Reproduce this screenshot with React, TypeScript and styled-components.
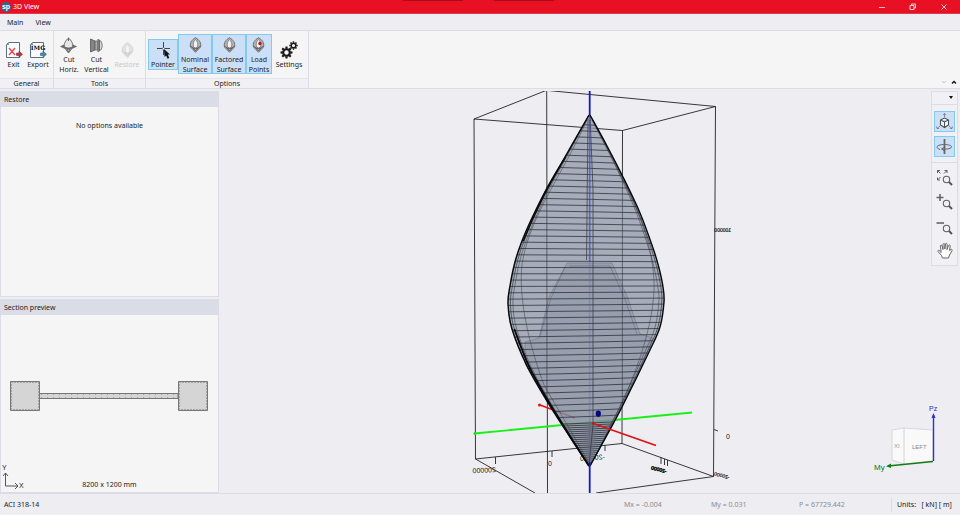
import React from "react";
import styled, { createGlobalStyle, css } from "styled-components";

const GlobalStyle = createGlobalStyle`
  * { box-sizing: border-box; }
  body { margin: 0; background: #eeedf2; color: #222; font-family: "Noto Sans", "Open Sans", sans-serif; font-size: 7px; line-height: 10px; }
  button { font: inherit; color: inherit; border: 0; padding: 0; background: none; }
  svg { display: block; }
`;

const Page = styled.div`
  min-height: 100vh;
  display: grid;
  grid-template-rows: 14px 17px 58px 1fr 22px;
`;

const TitleBar = styled.header`
  display: flex;
  align-items: center;
  gap: 2px;
  padding: 0 2px 0 1px;
  background: #e81123;
  color: #fff;
  border-bottom: 1px solid #dc3e50;
`;

const Title = styled.h1`
  flex: 1;
  margin: 0;
  font-size: 7px;
  font-weight: 400;
`;

const TitleTabs = styled.div`
  position: absolute;
  top: 0;
  left: 42%;
  width: 60px;
  height: 1px;
  background: #a50d1a;
  box-shadow: 91px 0 #a50d1a;
`;

const WindowButton = styled.button`
  width: 29px;
  height: 13px;
  display: grid;
  place-items: center;
`;

const MenuBar = styled.nav`
  display: flex;
  align-items: center;
  border-bottom: 1px solid #dcdce6;
`;

const MenuItem = styled.button`
  height: 16px;
  padding: 2px 6px 0;
  &:first-child { margin-left: 1px; }
`;

const Ribbon = styled.div`
  display: flex;
  background: #f5f5f5;
  border-bottom: 1px solid #dcdce6;
`;

const RibbonGroup = styled.section<{ $width: number }>`
  width: ${(p) => p.$width}px;
  display: grid;
  grid-template-rows: 1fr 10px;
  border-right: 1px solid #dcdce6;
`;

const RibbonItems = styled.div`
  display: flex;
  align-items: flex-start;
  justify-content: center;
  padding-top: 3px;
`;

const GroupName = styled.h2`
  margin: 0;
  font-size: 7px;
  font-weight: 400;
  text-align: center;
  border-top: 1px solid #e4e4ec;
  background: #f1f1f5;
`;

const RibbonButton = styled.button<{ $width: number; $on?: boolean; $short?: boolean; $off?: boolean }>`
  width: ${(p) => p.$width}px;
  height: ${(p) => (p.$short ? 31 : 40)}px;
  margin-top: ${(p) => (p.$short ? 5 : 0)}px;
  display: grid;
  grid-template-rows: 20px auto;
  align-content: start;
  justify-content: center;
  align-items: center;
  justify-items: center;
  text-align: center;
  white-space: pre;
  border: 1px solid transparent;
  ${(p) => p.$on && css`background: #cbdff7; border-color: #83cbee;`}
  ${(p) => p.$off && css`color: #c9c9c9;`}
`;

const RibbonEnd = styled.div`
  flex: 1;
  display: flex;
  align-items: flex-end;
  justify-content: flex-end;
  gap: 4px;
  padding: 0 3px 3px;
`;

const SmallButton = styled.button`
  width: 6px;
  height: 6px;
`;

const Workspace = styled.main`
  display: grid;
  grid-template-columns: 219px 1fr 29px;
  min-height: 0;
  padding-top: 2px;
`;

const Sidebar = styled.aside`
  display: grid;
  grid-template-rows: 206px 1fr;
  gap: 2px;
`;

const Panel = styled.section`
  display: flex;
  flex-direction: column;
  background: #f5f5f5;
  border: 1px solid #dcdce6;
`;

const PanelTitle = styled.h2`
  margin: 0;
  padding: 3px 3px 2px;
  font-size: 7px;
  font-weight: 400;
  background: #dadce6;
`;

const EmptyNote = styled.p`
  margin: 14px 0 0;
  text-align: center;
`;

const Preview = styled.figure`
  flex: 1;
  margin: 0;
  display: flex;
  flex-direction: column;
  justify-content: flex-end;
`;

const SectionDrawing = styled.svg`
  width: 100%;
  height: 32px;
  margin-bottom: 51px;
`;

const PreviewFooter = styled.figcaption`
  display: grid;
  grid-template-columns: 26px 1fr 26px;
  align-items: end;
  text-align: center;
  padding-bottom: 2px;
`;

const Viewport = styled.div`
  position: relative;
  min-width: 0;
`;

const Scene = styled.svg`
  width: 100%;
  height: 100%;
`;

const ViewCube = styled.svg`
  position: absolute;
  right: -9px;
  bottom: 16px;
`;

const SceneText = styled.text<{ $size?: number }>`
  font-family: "Liberation Sans", Arial, sans-serif;
  font-size: ${(p) => p.$size ?? 7}px;
`;

const ToolStrip = styled.div`
  width: 27px;
  height: 175px;
  display: flex;
  flex-direction: column;
  align-items: center;
  background: #f1f1f5;
  border: 1px solid #dcdce6;
`;

const StripMenu = styled.button`
  width: 100%;
  height: 13px;
  display: flex;
  justify-content: flex-end;
  align-items: center;
  padding-right: 4px;
  border-bottom: 1px solid #dcdce6;
  margin-bottom: 6px;
`;

const StripButton = styled.button<{ $on?: boolean }>`
  width: 21px;
  height: 21px;
  margin-bottom: 4px;
  display: grid;
  place-items: center;
  border: 1px solid transparent;
  ${(p) => p.$on && css`background: #cbdff7; border-color: #83cbee;`}
`;

const StripDivider = styled.hr`
  width: 100%;
  margin: 1px 0 4px;
  border: 0;
  border-top: 1px solid #dcdce6;
`;

const StatusBar = styled.footer`
  display: grid;
  grid-template-columns: 1fr 87px 88px 92px 69px;
  align-items: center;
  padding-left: 4px;
  border-top: 1px solid #dcdce6;
`;

const Reading = styled.span`
  color: #8c8c92;
`;

const Units = styled.span`
  padding: 2px 0 2px 5px;
  border-left: 1px solid #dcdce6;
  white-space: pre;
`;

type Pt = [number, number];

const leftProfile: Pt[] = [[589, 115], [565, 157], [547, 188], [532, 218], [522, 241], [515, 262], [510, 286], [508, 304], [512, 329], [527, 366], [547, 401], [570, 437], [589, 466]];
const rightProfile: Pt[] = [[590, 115], [607, 146], [623, 177], [640, 213], [653, 248], [659, 268], [663, 287], [664, 302], [660, 327], [649, 352], [622, 407], [606, 437], [590, 466]];

const curve = (pts: Pt[], start = "M") =>
  pts.reduce((d, p, i) => {
    if (i === 0) return `${start}${p[0]} ${p[1]}`;
    const a = pts[Math.max(i - 2, 0)];
    const b = pts[i - 1];
    const e = pts[Math.min(i + 1, pts.length - 1)];
    return `${d}C${b[0] + (p[0] - a[0]) / 6} ${b[1] + (p[1] - a[1]) / 6} ${p[0] - (e[0] - b[0]) / 6} ${p[1] - (e[1] - b[1]) / 6} ${p[0]} ${p[1]}`;
  }, "");

const xAt = (pts: Pt[], y: number) => {
  for (let i = 1; i < pts.length; i++) {
    if (y <= pts[i][1]) {
      const [x0, y0] = pts[i - 1];
      const [x1, y1] = pts[i];
      return x0 + ((x1 - x0) * (y - y0)) / (y1 - y0);
    }
  }
  return pts[pts.length - 1][0];
};

const toward = (pts: Pt[], k: number): Pt[] => pts.map(([x, y]) => [590 + (x - 590) * k, y]);

const levels = [
  ...Array.from({ length: 48 }, (_, i) => 125 + i * 6.2),
  ...Array.from({ length: 21 }, (_, i) => 423 + i * 2),
];

const ringPath = levels
  .map((y) => {
    const xl = xAt(leftProfile, y);
    const xr = xAt(rightProfile, y);
    const tilt = ((y - 275) / 140) * ((xr - xl) / 150) * 3;
    return `M${xl} ${y + tilt}L${590 + (xr - xl) * 0.02} ${y}L${xr} ${y - tilt}`;
  })
  .join("");

const bodyPath = `${curve(leftProfile)} ${curve([...rightProfile].reverse(), "L")}Z`;

function Surface() {
  return (
    <Scene viewBox="219 91 712 402" preserveAspectRatio="xMidYMid meet" role="img" aria-label="Interaction surface">
      <g fill="none" stroke="#222" strokeWidth="0.9">
        <path d="M474 119L546 90.500M548 90.500L715.500 106.500L622.500 130.500L474 119L475.500 459L622 443.500L713.500 476.500L596 493M475.500 459L535 493M622.500 130.500L622 443.500M546.700 90L547.500 493M715.500 106.500L713.500 476.500" />
        <path d="M495.500 457v7M552 451v6M605 445v6M661 457v7M664.500 459v6M667.500 460v6M714 429.500l4 1.500" />
      </g>
      <path d="M474 433.500L692 412.500" stroke="#18f018" strokeWidth="1.800" />
      <path d="M540 405L575 418" stroke="#df1515" strokeWidth="1.800" />
      <circle cx="539.500" cy="405" r="1.500" fill="#e11" />
      <circle cx="475" cy="433.500" r="1.500" fill="#18e018" />
      <path d="M589.700 90V122" stroke="#1818c4" strokeWidth="1.800" />
      <path d={bodyPath} fill="#929aa9" fillOpacity="0.78" />
      <path d="M567 263H612L627 296L640 334L653 338Q640 372 622 407L590 465L559 419L525 364V342L539 338L549 297Z" fill="#636f89" fillOpacity="0.22" stroke="#4c5362" strokeOpacity="0.4" strokeWidth="0.8" />
      <path d="M569 266H610L625 299L637 334M565 267L551 298L540 336" fill="none" stroke="#566077" strokeOpacity="0.45" />
      <path d={ringPath} fill="none" stroke="#171b22" strokeWidth="0.85" strokeOpacity="0.78" />
      <g fill="none" stroke="#30343c" strokeWidth="0.7">
        <path d={curve(toward(leftProfile, 0.97))} />
        <path d={curve(toward(leftProfile, 0.94))} strokeOpacity="0.7" />
        <path d={curve(toward(rightProfile, 0.97))} />
        <path d={curve(toward(rightProfile, 0.93))} strokeOpacity="0.7" />
        <path d="M587 120C563 174 530 215 522 264C518 302 531 350 544 385L588 461M592 120C624 183 651 226 654 280C656 322 633 386 609 427" strokeOpacity="0.65" />
        <path d="M590 115L593 190V425L589 466M588 119L586.500 260" />
        <path d="M546.700 190V400M622.500 178V405" strokeOpacity="0.5" />
      </g>
      <path d={curve(leftProfile)} fill="none" stroke="#080a0d" strokeWidth="1.500" />
      <path d={curve(toward(leftProfile.slice(1, 5), 0.98))} fill="none" stroke="#080a0d" strokeWidth="1.400" />
      <path d={curve(toward(leftProfile.slice(8), 0.97))} fill="none" stroke="#080a0d" strokeWidth="1.800" />
      <path d={curve(rightProfile)} fill="none" stroke="#080a0d" strokeWidth="1.400" />
      <path d="M589.700 120V262" stroke="#3a40b8" strokeWidth="1.600" strokeOpacity="0.65" />
      <path d="M589.700 262V460" stroke="#4a55a0" strokeWidth="1.500" strokeOpacity="0.25" />
      <path d="M589.700 462V493" stroke="#1818c4" strokeWidth="1.800" />
      <path d="M592 423L656 445.500" stroke="#e01010" strokeWidth="1.800" />
      <ellipse cx="598.300" cy="413.700" rx="2.600" ry="3.100" fill="#050580" />
      <g fill="#181818">
        <SceneText transform="translate(496 472) rotate(-3) scale(-1 1)">200000</SceneText>
        <SceneText x="548" y="466">0</SceneText>
        <SceneText x="580" y="461">0</SceneText>
        <SceneText transform="translate(605 459) rotate(-5) scale(-1 1)" $size={7}>-20</SceneText>
        <SceneText transform="translate(666 473) rotate(13) scale(-1 1)" $size={5} stroke="#181818" strokeWidth="0.6">-20000</SceneText>
        <SceneText transform="translate(729 479) rotate(13) scale(-1 1)" $size={5} stroke="#181818" strokeWidth="0.2">-20000</SceneText>
        <SceneText x="726" y="439">0</SceneText>
        <SceneText transform="translate(731 232) scale(-1 1)" $size={5} stroke="#181818" strokeWidth="0.2">100000</SceneText>
      </g>
    </Scene>
  );
}

function OrientationCube() {
  return (
    <ViewCube width="72" height="76" viewBox="868 401 72 76" aria-label="View orientation">
      <path d="M892 430L904 428L933 430V461L904 464L892 460Z" fill="#f9f9fa" stroke="#d9d9dd" />
      <path d="M904 428V464" stroke="#d2d2d6" />
      <path d="M933.500 461V415" stroke="#3030d0" strokeWidth="1.400" />
      <path d="M931.500 418L933.500 413L935.500 418Z" fill="#3030d0" />
      <path d="M933 461.500L888 466" stroke="#167a16" strokeWidth="1.500" />
      <path d="M891 463.500L886 466.300L891 468Z" fill="#167a16" />
      <SceneText x="929" y="411" $size={7} fill="#2828d0">Pz</SceneText>
      <SceneText x="874" y="470" $size={8} fill="#107010">My</SceneText>
      <SceneText x="912" y="449" $size={6} fill="#888">LEFT</SceneText>
      <SceneText x="894" y="448" $size={6} fill="#999">XI</SceneText>
    </ViewCube>
  );
}

const DoorIcon = ({ label }: { label?: string }) => (
  <svg width="18" height="18" viewBox="0 0 18 18">
    <path d="M3.500 1.500H14.500V16.500H1.500V3.500Z" fill="#fafcff" stroke="#587080" />
    <path d="M1.500 4L4 1.500V4Z" fill="#8799a5" />
    {label ? (
      <text x="9" y="9" textAnchor="middle" fontSize="6" fontWeight="900" fontFamily="DejaVu Serif, serif" fill="#050505">{label}</text>
    ) : (
      <path d="M4 7L10 14M10 7L4 14" stroke="#ef3a3a" strokeWidth="1.200" />
    )}
    <path d="M11.500 12H14V10L17.500 13.300L14 16.500V14.500H11.500Z" fill={label ? "#4e86a9" : "#b83447"} stroke={label ? "#336580" : "#82333d"} strokeWidth="0.6" />
  </svg>
);

const CutHorizontalIcon = () => (
  <svg width="17" height="17" viewBox="0 0 17 17">
    <path d="M8.500 1C5 4 4 7 4 10L8.500 16L13 10C13 7 12 4 8.500 1Z" fill="#e7e7e7" stroke="#646464" />
    <path d="M4 8L0.500 9.500L4 11L8.500 12.500L13 11L16.500 9.500L13 8V10L8.500 11L4 10Z" fill="#777" stroke="#555" strokeWidth="0.6" />
    <path d="M8.500 1V4M7 12L8.500 15L10 12" stroke="#666" fill="none" />
  </svg>
);

const CutVerticalIcon = () => (
  <svg width="15" height="17" viewBox="0 0 15 17">
    <path d="M1.500 2L6 4V13L1.500 15Z" fill="#858585" stroke="#555" strokeWidth="0.8" />
    <path d="M6 4H9V13H6ZM9 2L10.500 4V13L9 15Z" fill="#a9a9a9" stroke="#666" strokeWidth="0.8" />
    <path d="M10.500 3C14 5 14 12 10.500 14Z" fill="#dcdcdc" stroke="#555" strokeWidth="0.8" />
  </svg>
);

const SurfaceIcon = ({ dot, pale }: { dot?: boolean; pale?: boolean }) => (
  <svg width="13" height="16" viewBox="0 0 13 16" opacity={pale ? 0.25 : 1}>
    <path d="M6.500 0.700C2.500 3 0.500 6 1.500 10L6.500 15.300L11.500 10C12.500 6 10.500 3 6.500 0.700Z" fill="#b5b5b5" stroke="#666" strokeWidth="0.9" />
    <path d="M6.500 2.500C4.500 4 3.700 7 4.500 10L6.500 11L8.500 10C9.300 7 8.500 4 6.500 2.500Z" fill="#f2f2f2" stroke="#777" strokeWidth="0.8" />
    <path d="M1.500 9L4 11L6.500 11.500L9 11L11.500 9M4 11L6.500 14L9 11" fill="none" stroke="#555" strokeWidth="0.9" />
    {dot && <circle cx="8" cy="6.500" r="1.700" fill="#c3131d" />}
  </svg>
);

const PointerIcon = () => (
  <svg width="18" height="17" viewBox="0 0 18 17">
    <path d="M9.500 0V6M9.500 8V13M3 6.500H8.500M10.500 6.500H16" stroke="#333" strokeWidth="0.9" />
    <path d="M10 7L16 12.500H13.800L15.300 16L13.500 16.700L12.200 13.500L10.500 15Z" fill="#111" />
    <circle cx="9.500" cy="6.500" r="1" fill="#fff" stroke="#333" strokeWidth="0.5" />
  </svg>
);

const Gear = ({ x, y, s }: { x: number; y: number; s: number }) => (
  <g transform={`translate(${x} ${y}) scale(${s})`}>
    <circle r="3.300" fill="none" stroke="#181818" strokeWidth="2.100" />
    {[0, 45, 90, 135, 180, 225, 270, 315].map((a) => (
      <path key={a} d="M-1.200 -3.800L-1 -6H1L1.200 -3.800Z" fill="#181818" transform={`rotate(${a})`} />
    ))}
  </g>
);

const GearsIcon = () => (
  <svg width="18" height="18" viewBox="0 0 18 18">
    <Gear x={6.5} y={11.5} s={1} />
    <Gear x={13.5} y={4.5} s={0.7} />
  </svg>
);

const ZoomIcon = ({ mode }: { mode: "fit" | "in" | "out" }) => (
  <svg width="17" height="17" viewBox="0 0 17 17">
    <circle cx="10.500" cy="10.500" r="3.200" fill="none" stroke="#626262" strokeWidth="1.100" />
    <path d="M13 13L16 16" stroke="#555" strokeWidth="2" />
    {mode === "fit" && <path d="M4.500 4.500L1.500 1.500M1.500 4V1.500H4M8 4.500L11 1.500M8.500 1.500H11V4M4.500 8L1.500 11M1.500 8.500V11H4" fill="none" stroke="#606060" />}
    {mode === "in" && <path d="M0.500 4.500H7.500M4 1V8" stroke="#666" strokeWidth="1.600" />}
    {mode === "out" && <path d="M0.500 5H8" stroke="#666" strokeWidth="1.600" />}
  </svg>
);

const Arrow = () => (
  <svg width="4" height="3" viewBox="0 0 4 3"><path d="M0 0H4L2 3Z" fill="#111" /></svg>
);

export default function App() {
  return (
    <>
      <GlobalStyle />
      <Page>
        <TitleBar>
          <svg width="10" height="10" viewBox="0 0 10 10">
            <circle cx="5" cy="5" r="5" fill="#35658b" />
            <text x="5" y="7" textAnchor="middle" fontFamily="Liberation Sans" fontSize="7" fontWeight="700" fill="#fff">sp</text>
          </svg>
          <Title>3D View</Title>
          <TitleTabs />
          <WindowButton aria-label="Minimize"><svg width="6" height="6"><path d="M0 3.500H6" stroke="#fff" strokeWidth="0.7" /></svg></WindowButton>
          <WindowButton aria-label="Restore window"><svg width="7" height="7" fill="none" stroke="#fff" strokeWidth="0.8"><path d="M1 2.500H5V6.500H1ZM2.500 2.500V1H6.500V5H5" /></svg></WindowButton>
          <WindowButton aria-label="Close"><svg width="6" height="6"><path d="M0.500 0.500L5.500 5.500M5.500 0.500L0.500 5.500" stroke="#fff" strokeWidth="0.8" /></svg></WindowButton>
        </TitleBar>

        <MenuBar>
          <MenuItem>Main</MenuItem>
          <MenuItem>View</MenuItem>
        </MenuBar>

        <Ribbon>
          <RibbonGroup $width={54}>
            <RibbonItems>
              <RibbonButton $width={23} $short><DoorIcon />Exit</RibbonButton>
              <RibbonButton $width={26} $short><DoorIcon label="IMG" />Export</RibbonButton>
            </RibbonItems>
            <GroupName>General</GroupName>
          </RibbonGroup>
          <RibbonGroup $width={92}>
            <RibbonItems>
              <RibbonButton $width={26}><CutHorizontalIcon />{"Cut\nHoriz."}</RibbonButton>
              <RibbonButton $width={29}><CutVerticalIcon />{"Cut\nVertical"}</RibbonButton>
              <RibbonButton $width={32} $short $off disabled><SurfaceIcon pale />Restore</RibbonButton>
            </RibbonItems>
            <GroupName>Tools</GroupName>
          </RibbonGroup>
          <RibbonGroup $width={163}>
            <RibbonItems>
              <RibbonButton $width={30} $short $on aria-pressed="true"><PointerIcon />Pointer</RibbonButton>
              <RibbonButton $width={34} $on aria-pressed="true"><SurfaceIcon />{"Nominal\nSurface"}</RibbonButton>
              <RibbonButton $width={34} $on aria-pressed="true"><SurfaceIcon />{"Factored\nSurface"}</RibbonButton>
              <RibbonButton $width={26} $on aria-pressed="true"><SurfaceIcon dot />{"Load\nPoints"}</RibbonButton>
              <RibbonButton $width={34} $short><GearsIcon />Settings</RibbonButton>
            </RibbonItems>
            <GroupName>Options</GroupName>
          </RibbonGroup>
          <RibbonEnd>
            <SmallButton aria-label="Expand ribbon" disabled><svg width="6" height="5"><path d="M1 1L3 3L5 1" fill="none" stroke="#c5c5cb" /></svg></SmallButton>
            <SmallButton aria-label="Collapse ribbon"><svg width="6" height="5"><path d="M1 3.500L3 1.500L5 3.500" fill="none" stroke="#111" strokeWidth="1.400" /></svg></SmallButton>
          </RibbonEnd>
        </Ribbon>

        <Workspace>
          <Sidebar>
            <Panel>
              <PanelTitle>Restore</PanelTitle>
              <EmptyNote>No options available</EmptyNote>
            </Panel>
            <Panel>
              <PanelTitle>Section preview</PanelTitle>
              <Preview>
                <SectionDrawing viewBox="0 0 217 32" aria-label="Wall section">
                  <g fill="#d5d5d5" stroke="#777">
                    <path d="M38 13.500H177V18.500H38Z" />
                    <path d="M9.500 1.500H38.500V30.500H9.500ZM177.500 1.500H206.500V30.500H177.500Z" />
                  </g>
                  <path d="M10.500 2.500H37.500V29.500H10.500ZM178.500 2.500H205.500V29.500H178.500Z" fill="none" stroke="#777" strokeDasharray="1 2" />
                  <path d="M40 14.500H176M40 17.500H176" stroke="#aaa" strokeDasharray="1 5" />
                </SectionDrawing>
                <PreviewFooter>
                  <svg width="26" height="27" viewBox="0 0 26 27">
                    <path d="M4.500 10V23H17M2 13L4.500 10L7 13M14 20L17 23L14 26" fill="none" stroke="#444" strokeWidth="0.9" />
                    <SceneText x="1" y="7" $size={7} fill="#222">Y</SceneText>
                    <SceneText x="18" y="25" $size={7} fill="#222">X</SceneText>
                  </svg>
                  8200 x 1200 mm
                </PreviewFooter>
              </Preview>
            </Panel>
          </Sidebar>

          <Viewport>
            <Surface />
            <OrientationCube />
          </Viewport>

          <ToolStrip>
            <StripMenu aria-label="Toolbar options"><Arrow /></StripMenu>
            <StripButton $on aria-label="Isometric view">
              <svg width="19" height="19" viewBox="0 0 19 19" fill="none">
                <path d="M9.500 6L13.500 8V13L9.500 15.500L5.500 13V8ZM5.500 8L9.500 10L13.500 8M9.500 10V15.500" fill="#fff" stroke="#4b4f54" strokeWidth="1.100" />
                <path d="M9.500 5V1.500M8 3L9.500 1.500L11 3M5 14L2 16.500M1.500 14.500L2 16.500H4M14 14L17 16.500M17.500 14.500L17 16.500H15" stroke="#6e7780" strokeWidth="0.8" />
              </svg>
            </StripButton>
            <StripButton $on aria-label="Rotate about axis">
              <svg width="19" height="19" viewBox="0 0 19 19" fill="none">
                <path d="M9.500 2V17" stroke="#666" strokeWidth="1.800" />
                <path d="M5 12.500C1 11 1 9 5 8C9 7 15 7.500 16.500 9.500C17 11.500 12 12.500 7 12M9 10.500L6.500 12L9 13.500" stroke="#666" />
              </svg>
            </StripButton>
            <StripDivider />
            <StripButton aria-label="Zoom extents"><ZoomIcon mode="fit" /></StripButton>
            <StripButton aria-label="Zoom in"><ZoomIcon mode="in" /></StripButton>
            <StripButton aria-label="Zoom out"><ZoomIcon mode="out" /></StripButton>
            <StripButton aria-label="Pan">
              <svg width="16" height="17" viewBox="0 0 16 17">
                <path d="M4 9L3.500 4C3.500 2.800 5 2.800 5.200 4L6 7.500V2.500C6 1.200 7.800 1.200 7.800 2.500V7L8.500 2C8.700 0.900 10.300 1.200 10.200 2.500L10 7.500L11.500 3.500C12 2.500 13.500 3 13.200 4L12.500 8.500L14 7.500C15 7 15.500 8 15 8.800L12.500 13L11.500 16H5.500L4.500 13.500L1 9.500C0.500 8.500 1.800 7.800 2.500 8.500L4 10.500Z" fill="#fff" stroke="#666" />
              </svg>
            </StripButton>
          </ToolStrip>
        </Workspace>

        <StatusBar>
          <span>ACI 318-14</span>
          <Reading>Mx = -0.004</Reading>
          <Reading>My = 0.031</Reading>
          <Reading>P = 67729.442</Reading>
          <Units>{"Units:   [ kN] [ m]"}</Units>
        </StatusBar>
      </Page>
    </>
  );
}
